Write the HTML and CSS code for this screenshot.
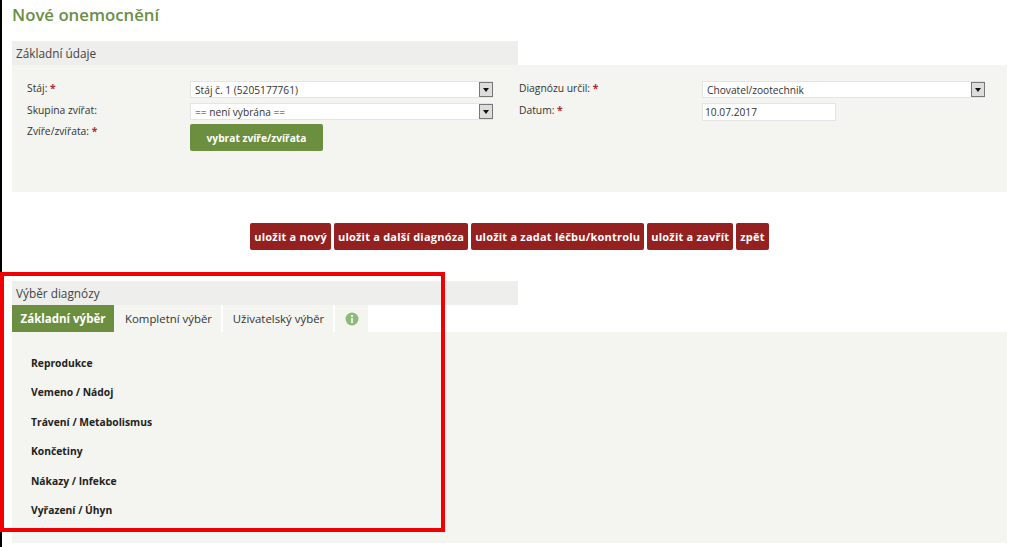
FILE: index.html
```html
<!DOCTYPE html>
<html lang="cs">
<head>
<meta charset="utf-8">
<title>Nové onemocnění</title>
<link rel="stylesheet" href="styles.css">
</head>
<body>
<div class="page">
  <h1 class="title">Nové onemocnění</h1>
  <section class="section basic">
    <h2 class="section-head">Základní údaje</h2>
    <div class="panel form-panel">
      <div class="form-col left">
        <div class="row"><span class="label">Stáj: <b class="req">*</b></span><span class="select"><span class="value">Stáj č. 1 (5205177761)</span><span class="arrow"></span></span></div>
        <div class="row"><span class="label">Skupina zvířat:</span><span class="select"><span class="value">== není vybrána ==</span><span class="arrow"></span></span></div>
        <div class="row"><span class="label">Zvíře/zvířata: <b class="req">*</b></span><span class="pick">vybrat zvíře/zvířata</span></div>
      </div>
      <div class="form-col right">
        <div class="row"><span class="label">Diagnózu určil: <b class="req">*</b></span><span class="select"><span class="value">Chovatel/zootechnik</span><span class="arrow"></span></span></div>
        <div class="row"><span class="label">Datum: <b class="req">*</b></span><span class="date">10.07.2017</span></div>
      </div>
    </div>
  </section>
  <div class="actions">
    <span class="action">uložit a nový</span>
    <span class="action">uložit a další diagnóza</span>
    <span class="action">uložit a zadat léčbu/kontrolu</span>
    <span class="action">uložit a zavřít</span>
    <span class="action">zpět</span>
  </div>
  <section class="section">
    <h2 class="section-head">Výběr diagnózy</h2>
    <div class="tabs">
      <span class="tab active">Základní výběr</span>
      <span class="tab t2">Kompletní výběr</span>
      <span class="tab t3">Uživatelský výběr</span>
      <span class="tab info"><svg class="info-icon" width="14" height="14" viewBox="0 0 14 14"><circle cx="7" cy="7" r="6.5" fill="#8dbb78"/><rect x="6" y="6" width="2" height="5" fill="#e8f2e2"/><rect x="6" y="3" width="2" height="2" fill="#e8f2e2"/></svg></span>
    </div>
    <div class="panel diag-panel">
      <div class="diag">Reprodukce</div>
      <div class="diag">Vemeno / Nádoj</div>
      <div class="diag">Trávení / Metabolismus</div>
      <div class="diag">Končetiny</div>
      <div class="diag">Nákazy / Infekce</div>
      <div class="diag">Vyřazení / Úhyn</div>
    </div>
  </section>
  <div class="highlight"></div>
</div>
</body>
</html>
```
FILE: styles.css
```css
* { box-sizing: border-box; }
html, body { margin: 0; padding: 0; }
body { background: #fff; font-family: "Open Sans", sans-serif; color: #333; }
.page { position: relative; width: 1023px; height: 547px; overflow: hidden; padding: 5px 16px 0 12px; }
.page::before { content: ""; position: absolute; left: 0; top: 0; width: 2px; height: 100%; background: #000; }
.title { margin: 0 0 16px; height: 20px; font-size: 16.8px; line-height: 20px; font-weight: 600; color: #6b8e45; }
.section-head { margin: 0; width: 506px; height: 24px; padding-left: 4px; font-size: 11.8px; line-height: 24px; font-weight: 400; color: #444; background: #eeeeec; }
.panel { background: #f4f4f0; }
.form-panel { display: flex; height: 127px; padding: 16px 0 0 15px; }
.form-col { display: flex; flex-direction: column; gap: 5px; }
.form-col.left { width: 492px; }
.row { display: flex; font-size: 10.3px; line-height: 14px; }
.left .row:nth-child(3) { margin-top: -1px; }
.label { width: 163px; color: #333; }
.form-col.right .label { width: 183px; }
.req { color: #b02a2a; font-weight: 700; }
.select { display: flex; align-items: center; justify-content: space-between; height: 17px; background: #fff; border: 1px solid #e4e4e2; padding: 0 0 0 3px; font-size: 10.2px; color: #333; }
.left .select { width: 303px; }
.right .select { width: 283px; }
.value { padding-left: 1px; }
.arrow { position: relative; width: 14px; height: 15px; margin-right: -1px; background: #ddd; border: 1px solid #777; }
.arrow::after { content: ""; position: absolute; left: 3px; top: 5px; border: 3px solid transparent; border-top: 4px solid #111; border-bottom: 0; }
.pick { display: flex; align-items: center; justify-content: center; width: 133px; height: 27px; border-radius: 2px; background: #6b8e3f; color: #fff; font-size: 10.2px; font-weight: 700; }
.date { width: 134px; height: 18px; background: #fff; border: 1px solid #e4e4e2; padding-left: 2px; font-size: 10.2px; line-height: 17px; }
.actions { display: flex; justify-content: center; gap: 3px; margin: 31px 0 31px 0; }
.action { height: 27px; padding: 0 4px; border-radius: 2px; background: #94201f; color: #fff; font-size: 11px; line-height: 27px; font-weight: 700; letter-spacing: 0.22px; white-space: nowrap; }
.tabs { display: flex; height: 27px; font-size: 11.4px; line-height: 25px; }
.tab { display: flex; align-items: center; justify-content: center; background: #f4f4f0; color: #333; margin-right: 2px; }
.tab.active { width: 102px; margin-right: 0; background: #6b8e3f; color: #fff; font-weight: 700; font-size: 11.5px; }
.tab.t2 { width: 107px; padding-left: 2px; }
.tab.t3 { width: 110px; padding-left: 1px; }
.tab.info { width: 33px; margin-right: 0; }
.info-icon { display: block; }
.diag-panel { height: 211px; padding: 24px 0 0 19px; }
.diag { height: 29.4px; font-size: 10.3px; line-height: 15px; font-weight: 700; color: #222; }
.highlight { position: absolute; left: 0; top: 272px; width: 445px; height: 260px; border: 4px solid #f00000; pointer-events: none; }
```
